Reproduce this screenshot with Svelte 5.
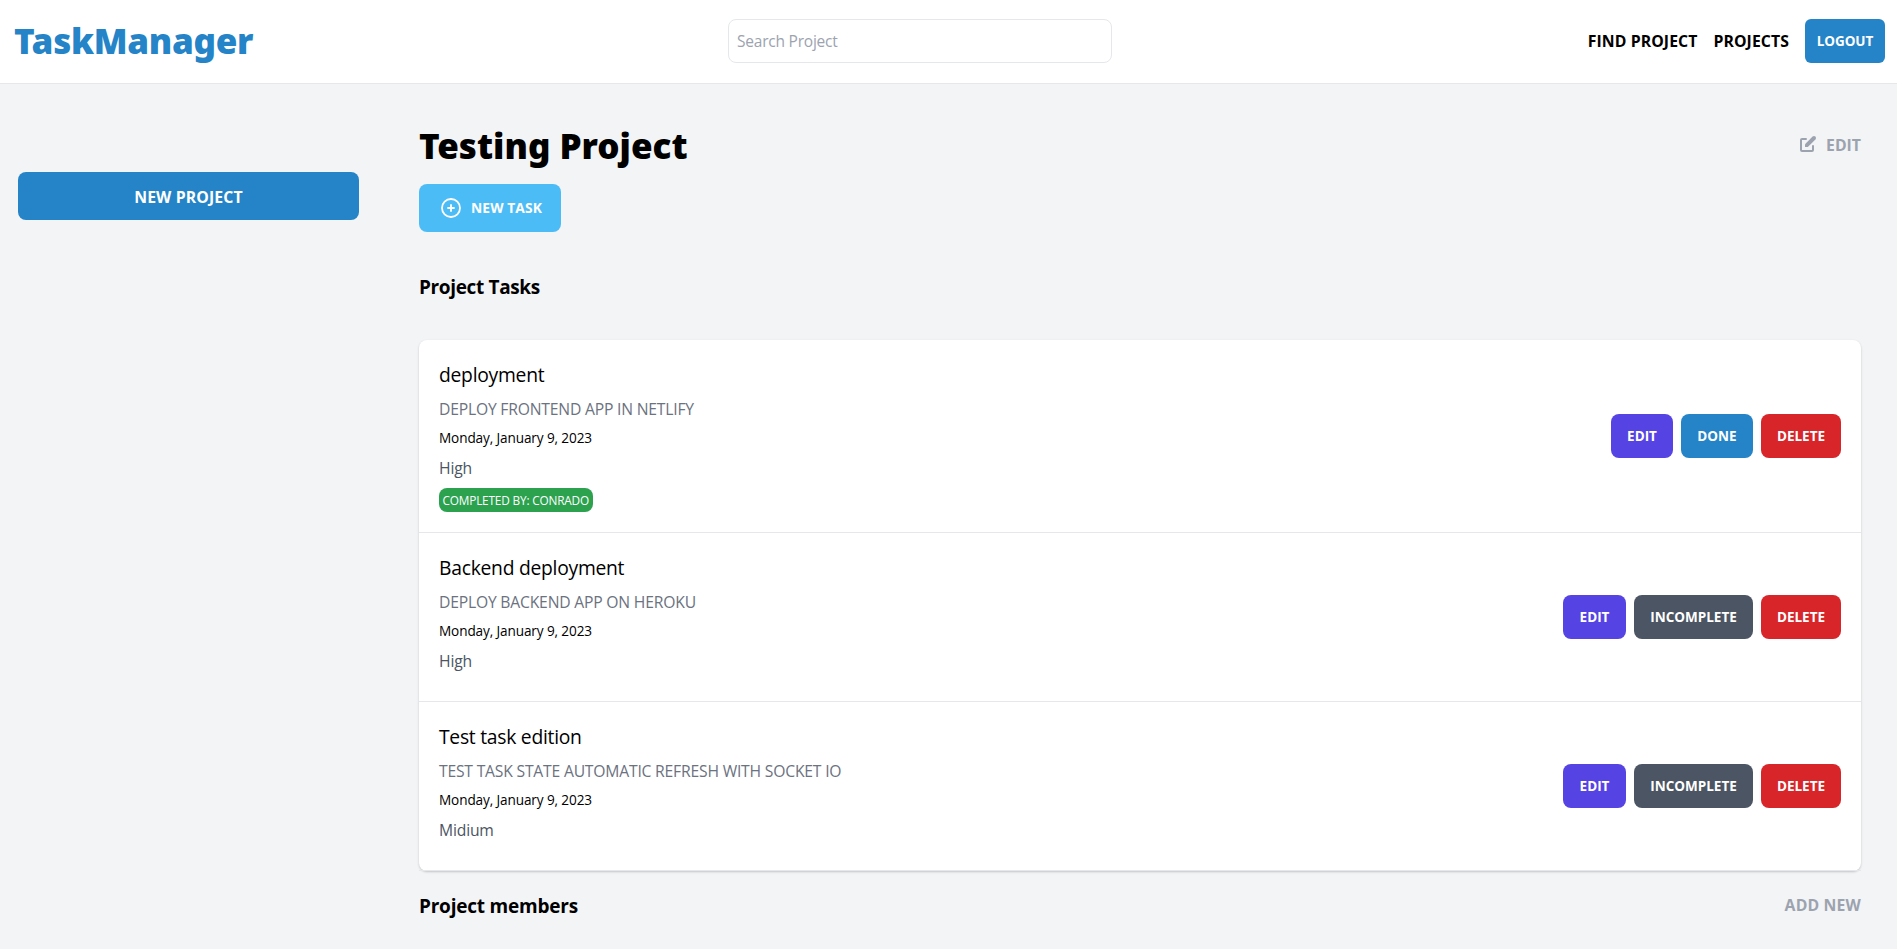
<script>
  const tasks = [
    { name: 'deployment', description: 'Deploy frontend app in Netlify', date: 'Monday, January 9, 2023', priority: 'High', completedBy: 'Conrado' },
    { name: 'Backend deployment', description: 'Deploy backend app on Heroku', date: 'Monday, January 9, 2023', priority: 'High' },
    { name: 'Test task edition', description: 'Test task state automatic refresh with socket io', date: 'Monday, January 9, 2023', priority: 'Midium' }
  ];
</script>

<header>
  <h1 class="logo">TaskManager</h1>
  <input type="search" placeholder="Search Project" />
  <nav>
    <a href="#find">FIND PROJECT</a>
    <a href="#projects">PROJECTS</a>
    <button class="logout">LOGOUT</button>
  </nav>
</header>

<div class="body">
  <aside><a class="new-project" href="#new">NEW PROJECT</a></aside>
  <main>
    <div class="heading">
      <h1>Testing Project</h1>
      <a class="edit" href="#edit">
        <svg width="20" height="20" viewBox="0 0 20 20" fill="currentColor">
          <path d="M17.414 2.586a2 2 0 00-2.828 0L7 10.172V13h2.828l7.586-7.586a2 2 0 000-2.828z" />
          <path fill-rule="evenodd" d="M2 6a2 2 0 012-2h4a1 1 0 010 2H4v10h10v-4a1 1 0 112 0v4a2 2 0 01-2 2H4a2 2 0 01-2-2V6z" clip-rule="evenodd" />
        </svg>
        <span>EDIT</span>
      </a>
    </div>
    <button class="new-task">
      <svg width="24" height="24" viewBox="0 0 24 24" fill="none" stroke="currentColor" stroke-width="1.8" stroke-linecap="round" stroke-linejoin="round">
        <path d="M12 9v3m0 0v3m0-3h3m-3 0H9m12 0a9 9 0 11-18 0 9 9 0 0118 0z" />
      </svg>
      <span>NEW TASK</span>
    </button>
    <h2 class="tasks-title">Project Tasks</h2>
    <div class="card">
      {#each tasks as task}
        <div class="row" class:tall={task.completedBy}>
          <div class="info">
            <p class="name">{task.name}</p>
            <p class="desc">{task.description}</p>
            <p class="date">{task.date}</p>
            <p class="prio">{task.priority}</p>
            {#if task.completedBy}<p class="badge">Completed by: {task.completedBy}</p>{/if}
          </div>
          <div class="actions">
            <button class="b-edit">EDIT</button>
            {#if task.completedBy}
              <button class="b-done">DONE</button>
            {:else}
              <button class="b-inc">INCOMPLETE</button>
            {/if}
            <button class="b-del">DELETE</button>
          </div>
        </div>
      {/each}
    </div>
    <div class="members">
      <h2>Project members</h2>
      <a href="#add">ADD NEW</a>
    </div>
  </main>
</div>

<style>
  :global(body) { margin: 0; background: #f3f4f6; overflow: hidden; }
  :global(#app) { font-family: 'Open Sans', 'Noto Sans', sans-serif; color: #000; }
  header, .body, header *, .body * { box-sizing: border-box; }
  h1, h2, p { margin: 0; font-weight: inherit; }
  a { color: inherit; text-decoration: none; }
  button { border: 0; padding: 0; font: inherit; color: #fff; cursor: pointer; white-space: nowrap; }
  svg { display: block; flex: none; }

  header { display: flex; align-items: center; height: 84px; padding: 0 12px 2px 14px; background: #fff; border-bottom: 1px solid #e5e7eb; }
  .logo { width: 714px; font: 900 35px/40px 'Noto Sans', sans-serif; letter-spacing: -0.28px; color: #2484c7; }
  input { width: 384px; height: 44px; padding: 1px 8px 0; border: 1px solid #e5e7eb; border-radius: 8px; background: #fff; font: 400 15.5px/24px 'Open Sans', sans-serif; letter-spacing: -0.22px; outline: 0; }
  input::placeholder { color: #9ca3af; opacity: 1; }
  nav { display: flex; align-items: center; gap: 16px; margin-left: auto; font-weight: 700; font-size: 15.8px; letter-spacing: 0.08px; white-space: nowrap; }
  nav a { padding-top: 1px; }
  .logout { width: 80px; height: 44px; border-radius: 6px; background: #2484c7; font-size: 13.5px; letter-spacing: -0.1px; }

  .body { display: flex; height: 865px; }
  aside { width: 377px; padding: 88px 18px 0; }
  .new-project { display: flex; align-items: center; justify-content: center; height: 48px; padding-top: 1px; border-radius: 8px; background: #2484c7; color: #fff; font-weight: 700; font-size: 15.8px; letter-spacing: 0.12px; }
  main { flex: 1; padding: 40px 36px 0 42px; }
  .heading { display: flex; justify-content: space-between; height: 40px; margin-bottom: 20px; }
  .heading h1 { font: 900 35px/44px 'Noto Sans', sans-serif; white-space: nowrap; }
  .edit { display: flex; align-items: center; gap: 8px; height: 40px; color: #9ca3af; font-weight: 700; font-size: 15.8px; }
  .edit span { padding-top: 1px; }
  .new-task { display: flex; align-items: center; gap: 8px; width: 142px; height: 48px; padding-left: 20px; border-radius: 8px; background: #4cbcf7; font-weight: 700; font-size: 13.8px; letter-spacing: 0.1px; }
  .new-task span { padding-bottom: 1px; }
  .tasks-title { margin-top: 40px; font-weight: 700; font-size: 19px; line-height: 30px; letter-spacing: -0.35px; }

  .card { margin-top: 38px; background: #fff; border-radius: 8px; box-shadow: 0 1px 3px rgba(0,0,0,.1), 0 1px 2px rgba(0,0,0,.1); }
  .row { display: flex; justify-content: space-between; align-items: center; height: 169px; padding: 20px; border-bottom: 1px solid #e5e7eb; }
  .row.tall { height: 193px; }
  .info { align-self: flex-start; }
  .name { font-size: 19.3px; line-height: 30px; letter-spacing: -0.26px; }
  .desc { margin-top: 3px; font-size: 15.7px; line-height: 32px; letter-spacing: -0.2px; color: #6b7280; text-transform: uppercase; }
  .date { margin-top: -1px; font-size: 13.6px; line-height: 28px; letter-spacing: -0.12px; }
  .prio { font-size: 15.7px; line-height: 32px; letter-spacing: -0.18px; color: #4b5563; }
  .badge { width: 154px; height: 24px; margin-top: 4px; padding-left: 3.5px; border-radius: 8px; background: #2ca24f; color: #fff; font-size: 11.8px; line-height: 25px; letter-spacing: -0.17px; text-transform: uppercase; white-space: nowrap; }
  .actions { display: flex; gap: 8px; }
  .actions button { height: 44px; border-radius: 8px; font-weight: 700; font-size: 13.5px; }
  .actions .b-edit { width: 63px; background: #5543e3; }
  .actions .b-done { width: 72px; background: #2484c7; }
  .tall .actions .b-edit { width: 62px; }
  .b-inc { width: 119px; background: #4c5563; }
  .b-del { width: 80px; background: #d82529; }

  .members { display: flex; justify-content: space-between; align-items: center; margin-top: 19px; font-weight: 700; line-height: 28px; }
  .members h2 { padding-top: 2px; font-size: 19px; letter-spacing: -0.22px; }
  .members a { font-size: 15.8px; letter-spacing: 0.15px; color: #9ca3af; }
</style>
